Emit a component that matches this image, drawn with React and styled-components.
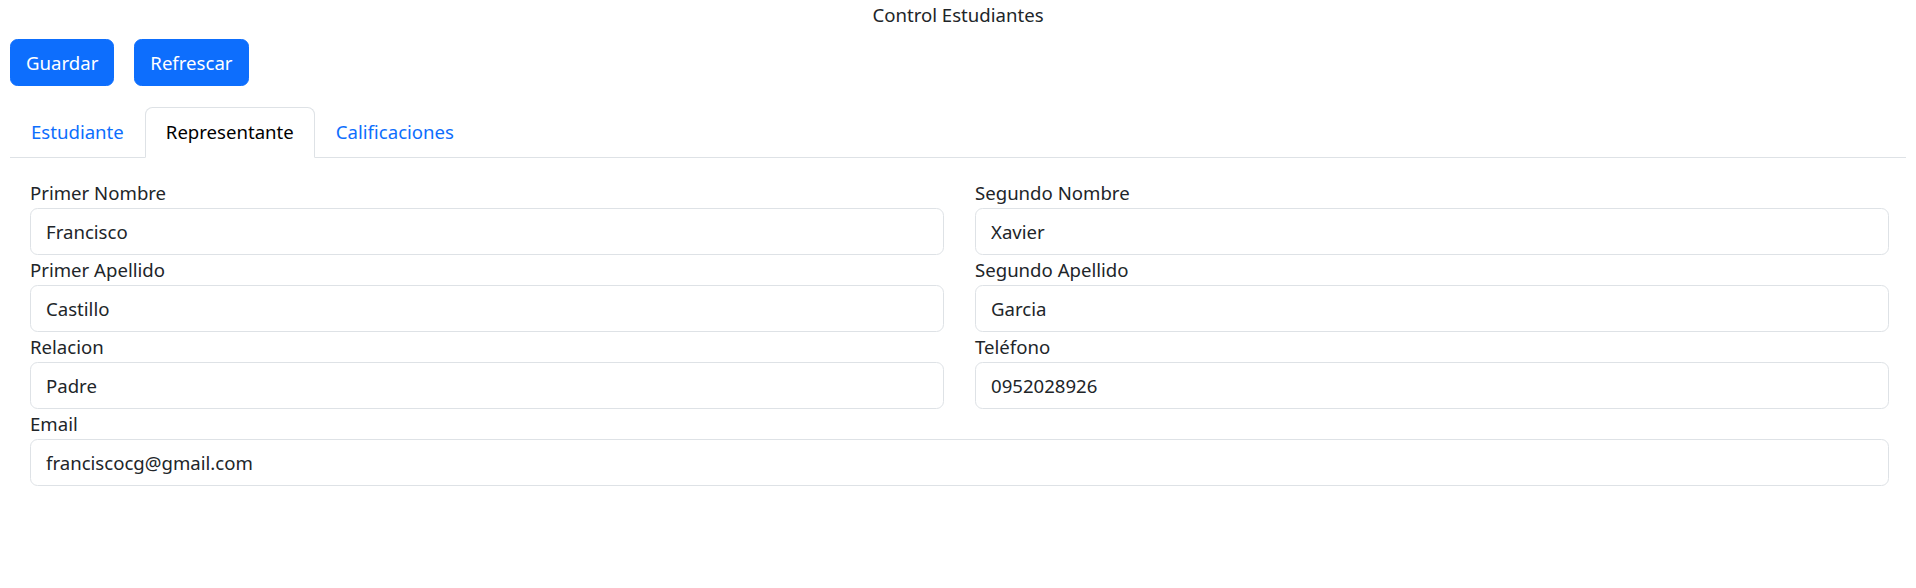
import React, { useState } from "react"
import styled, { createGlobalStyle } from "styled-components"

const GlobalStyle = createGlobalStyle`
  body {
    margin: 0 10px 10px;
    font-family: "Noto Sans", "Open Sans", sans-serif;
    font-size: 18.6px;
    line-height: 30px;
    color: #212529;
    background: #fff;
  }
  * { box-sizing: border-box; }
`;

const Title = styled.div`
  text-align: center;
`;

const Toolbar = styled.div`
  display: flex;
  gap: 20px;
  margin-top: 9px;
`;

const Button = styled.button`
  font: inherit;
  color: #fff;
  background: #0d6efd;
  border: 1px solid #0d6efd;
  border-radius: 7.5px;
  padding: 7.5px 15px;
  line-height: 30px;
  cursor: pointer;
`;

const Tabs = styled.nav`
  display: flex;
  margin-top: 21px;
  border-bottom: 1px solid #dee2e6;
`;

const Tab = styled.button`
  font: inherit;
  line-height: 30px;
  padding: 9px 20px 10px;
  margin-bottom: -1px;
  background: ${(p) => (p.$active ? "#fff" : "transparent")};
  color: ${(p) => (p.$active ? "#000" : "#0d6efd")};
  border: 1px solid ${(p) => (p.$active ? "#dee2e6" : "transparent")};
  border-bottom-color: ${(p) => (p.$active ? "#fff" : "transparent")};
  border-radius: 7.5px 7.5px 0 0;
  cursor: pointer;
`;

const Pane = styled.div`
  padding: 20px 17px 0 20px;
`;

const FormGrid = styled.div`
  display: grid;
  grid-template-columns: 1fr 1fr;
  column-gap: 31px;
`;

const Field = styled.div`
  display: flex;
  flex-direction: column;
  grid-column: ${(p) => (p.$wide ? "1 / -1" : "auto")};
`;

const Label = styled.label`
  line-height: 30px;
`;

const Input = styled.input`
  font: inherit;
  color: #212529;
  height: 47px;
  padding: 7.5px 15px;
  border: 1px solid #dee2e6;
  border-radius: 7.5px;
  background: #fff;
  outline: none;
`;

const fields = [
  { label: "Primer Nombre", value: "Francisco" },
  { label: "Segundo Nombre", value: "Xavier" },
  { label: "Primer Apellido", value: "Castillo" },
  { label: "Segundo Apellido", value: "Garcia" },
  { label: "Relacion", value: "Padre" },
  { label: "Teléfono", value: "0952028926" },
  { label: "Email", value: "franciscocg@gmail.com", wide: true },
];

export default function App() {
  const [tab, setTab] = useState("Representante");

  return (
    <>
      <GlobalStyle />
      <Title>Control Estudiantes</Title>
      <Toolbar>
        <Button>Guardar</Button>
        <Button>Refrescar</Button>
      </Toolbar>
      <Tabs>
        {["Estudiante", "Representante", "Calificaciones"].map((t) => (
          <Tab key={t} $active={tab === t} onClick={() => setTab(t)}>
            {t}
          </Tab>
        ))}
      </Tabs>
      <Pane>
        <FormGrid>
          {fields.map((f) => (
            <Field key={f.label} $wide={f.wide}>
              <Label>{f.label}</Label>
              <Input defaultValue={f.value} />
            </Field>
          ))}
        </FormGrid>
      </Pane>
    </>
  );
}
